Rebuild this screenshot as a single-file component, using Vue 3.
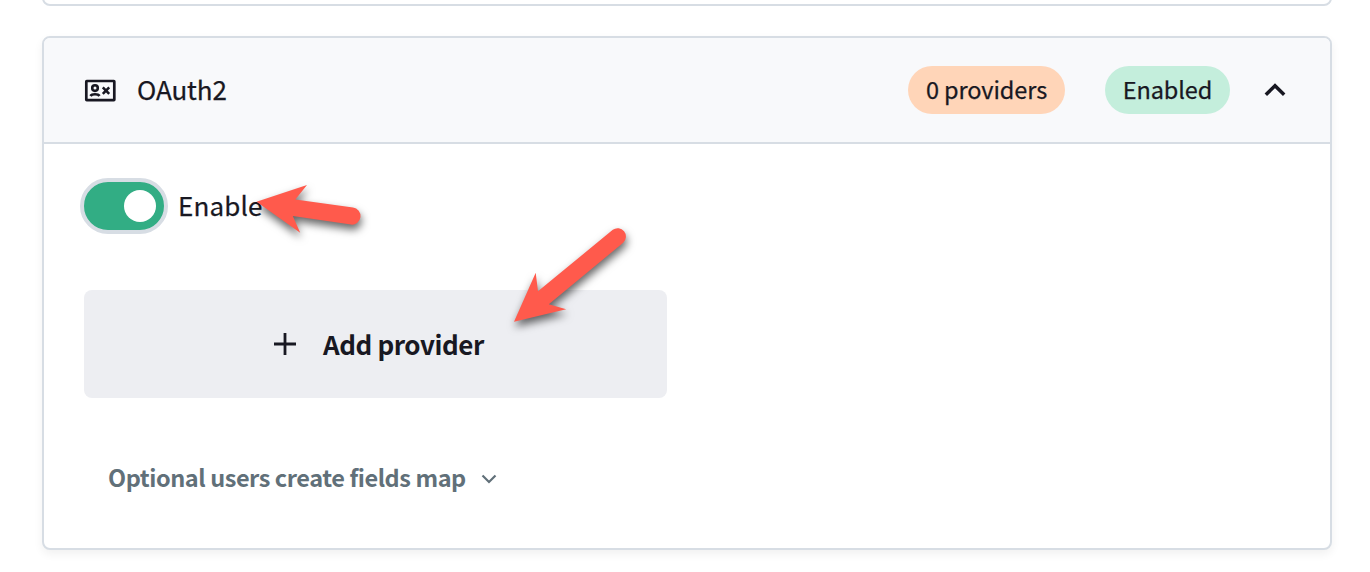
<script setup>
import { ref } from 'vue'

const enabled = ref(true)
const providers = ref([])
</script>

<template>
  <main class="page">
    <section class="panel previous"></section>
    <section class="panel accordion">
      <header class="head">
        <svg class="profile" viewBox="0 0 32 24" width="32" height="24">
          <rect x="2.3" y="3" width="28" height="19.2" rx="0.4" fill="none" stroke="currentColor" stroke-width="2.7" />
          <circle cx="11" cy="10.1" r="2.8" fill="none" stroke="currentColor" stroke-width="2.6" />
          <path d="M6.5 18C8 15.6 14 15.6 15.5 18M18.8 9.4l6.4 6.4M25.2 9.4L18.8 15.8" fill="none" stroke="currentColor" stroke-width="2.6" />
        </svg>
        <span class="title">OAuth2</span>
        <span class="label warning"><span class="label-text count">{{ providers.length }} providers</span></span>
        <span class="label success"><span class="label-text">Enabled</span></span>
        <svg class="caret" viewBox="0 0 22 14" width="22" height="14">
          <path d="M1.8 11.7L11 2.8l9.2 8.9" fill="none" stroke="currentColor" stroke-width="3.5" />
        </svg>
      </header>
      <div class="content">
        <label class="field" @click="enabled = !enabled">
          <span class="switch" :class="{ on: enabled }"><span class="knob"></span></span>
          <span class="enable">Enable</span>
        </label>
        <button class="add" type="button">
          <svg viewBox="0 0 24 24" width="24" height="24">
            <path d="M12 1v22M1 12h22" fill="none" stroke="currentColor" stroke-width="2.8" />
          </svg>
          <span class="add-text">Add provider</span>
        </button>
        <button class="fields" type="button">
          <span class="fields-text">Optional users create fields map</span>
          <svg viewBox="0 0 16 10" width="16" height="10">
            <path d="M1.5 1.5L8 8l6.5-6.5" fill="none" stroke="currentColor" stroke-width="2.2" />
          </svg>
        </button>
      </div>
    </section>
    <svg class="arrows" viewBox="0 0 1370 572" width="1370" height="572">
      <path d="M256.5 201.8L307 185L295.3 199.5L353 207.6A8.5 8.5 0 0 1 351 224.6L292.8 216L300.2 232.8Z" />
      <path d="M514 321.8L535.7 272.8L538 291.3L612.8 229.8A8.3 8.3 0 0 1 623.2 242.7L548.8 304.2L566.2 309.3Z" />
    </svg>
  </main>
</template>

<style>
body {
  background: #fff;
  overflow: hidden;
}
</style>

<style scoped>
.page {
  position: relative;
  box-sizing: border-box;
  width: 1370px;
  height: 572px;
  overflow: hidden;
  padding: 0 38px 0 42px;
  color: #181822;
  font-family: "Noto Sans CJK JP", "Noto Sans", sans-serif;
  white-space: nowrap;
}
.panel {
  box-sizing: border-box;
  border: 2px solid #d7dde4;
  border-radius: 8px;
  background: #fff;
}
.previous {
  height: 26px;
  margin-top: -20px;
}
.accordion {
  margin-top: 30px;
  height: 514px;
  overflow: hidden;
  box-shadow: 0 4px 10px rgba(0, 0, 0, 0.06);
}
.head {
  display: flex;
  align-items: center;
  box-sizing: border-box;
  height: 106px;
  padding: 0 44px 0 40px;
  border-bottom: 2px solid #d7dde4;
  background: #f8f9fb;
}
.title {
  margin-left: 21px;
  margin-right: auto;
  margin-bottom: 2px;
  font-size: 26px;
  line-height: 40px;
  letter-spacing: -0.1px;
  -webkit-text-stroke: 0.25px;
}
.label {
  display: flex;
  align-items: center;
  justify-content: center;
  box-sizing: border-box;
  height: 48px;
  padding-bottom: 2px;
  border-radius: 24px;
  font-size: 23.5px;
  line-height: 46px;
  -webkit-text-stroke: 0.25px;
}
.label-text {
  letter-spacing: -0.1px;
}
.warning {
  width: 157px;
  background: #ffd5b8;
}
.success {
  width: 125px;
  margin-left: 40px;
  background: #c4eedc;
}
.caret {
  margin-left: 34px;
}
.content {
  display: flex;
  flex-direction: column;
  align-items: flex-start;
  padding: 34px 36px;
}
.field {
  display: flex;
  align-items: center;
  height: 56px;
}
.switch {
  display: flex;
  align-items: center;
  box-sizing: border-box;
  width: 88px;
  height: 56px;
  padding: 0 8px;
  border: 4px solid #d7dde4;
  border-radius: 28px;
  background: #a9b4bc;
}
.switch.on {
  justify-content: flex-end;
  background: #32ad84;
}
.knob {
  width: 32px;
  height: 32px;
  border-radius: 50%;
  background: #fff;
}
.enable {
  margin-left: 10px;
  margin-bottom: 2px;
  font-size: 26px;
  line-height: 40px;
  letter-spacing: 0.15px;
  -webkit-text-stroke: 0.25px;
}
button {
  display: flex;
  align-items: center;
  border: 0;
  font-family: inherit;
  font-weight: 700;
}
.add {
  justify-content: center;
  gap: 26px;
  width: 583px;
  height: 108px;
  margin: 56px 0 0 4px;
  padding: 0 0 0 6px;
  border-radius: 8px;
  background: #edeef2;
  color: #181822;
  font-size: 26px;
}
.add-text {
  margin-bottom: 2px;
  letter-spacing: -0.42px;
}
.fields {
  gap: 15px;
  height: 50px;
  margin: 56px 0 0 28px;
  padding: 0;
  background: none;
  color: #617079;
  font-size: 23.5px;
}
.fields-text {
  margin-bottom: 5px;
  letter-spacing: -0.43px;
}
.arrows {
  position: absolute;
  inset: 0;
  pointer-events: none;
  fill: #ff5a4c;
  filter: drop-shadow(1px 5px 4px rgba(0, 0, 0, 0.6));
}
</style>
